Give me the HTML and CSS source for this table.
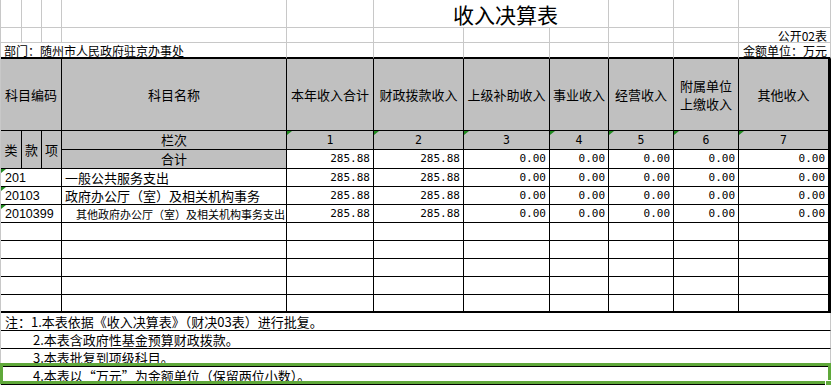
FILE: index.html
```html
<!DOCTYPE html>
<html lang="zh-CN">
<head>
<meta charset="utf-8">
<title>收入决算表</title>
<link rel="stylesheet" href="styles.css">
</head>
<body>
<div class="sheet">
<table class="grid">
<colgroup>
<col class="c1"><col class="c2"><col class="c3"><col class="c4"><col class="c5"><col class="c6"><col class="c7"><col class="c8"><col class="c9"><col class="c10"><col class="c11">
</colgroup>
<tbody>
<tr class="r-title">
<td></td><td></td><td></td><td></td><td></td>
<td colspan="3" class="title">收入决算表</td>
<td></td><td></td><td></td>
</tr>
<tr class="r-sub">
<td></td><td></td><td></td><td></td><td></td><td></td><td></td><td></td><td></td><td></td>
<td class="right">公开02表</td>
</tr>
<tr class="r-dept">
<td colspan="4" class="dept">部门：随州市人民政府驻京办事处</td>
<td></td><td></td><td></td><td></td><td></td><td></td>
<td class="right">金额单位：万元</td>
</tr>
<tr class="r-head">
<td colspan="3" class="h">科目编码</td>
<td class="h">科目名称</td>
<td class="h">本年收入合计</td>
<td class="h">财政拨款收入</td>
<td class="h">上级补助收入</td>
<td class="h">事业收入</td>
<td class="h">经营收入</td>
<td class="h">附属单位<br>上缴收入</td>
<td class="h last">其他收入</td>
</tr>
<tr class="r18">
<td rowspan="2" class="h">类</td>
<td rowspan="2" class="h">款</td>
<td rowspan="2" class="h">项</td>
<td class="h">栏次</td>
<td class="h idx tri">1</td>
<td class="h idx tri">2</td>
<td class="h idx tri">3</td>
<td class="h idx tri">4</td>
<td class="h idx tri">5</td>
<td class="h idx tri">6</td>
<td class="h idx tri last">7</td>
</tr>
<tr class="r18">
<td class="h">合计</td>
<td class="b num">285.88</td>
<td class="b num">285.88</td>
<td class="b num">0.00</td>
<td class="b num">0.00</td>
<td class="b num">0.00</td>
<td class="b num">0.00</td>
<td class="b num last">0.00</td>
</tr>
<tr class="r18">
<td colspan="3" class="b code tri">201</td>
<td class="b name">一般公共服务支出</td>
<td class="b num">285.88</td>
<td class="b num">285.88</td>
<td class="b num">0.00</td>
<td class="b num">0.00</td>
<td class="b num">0.00</td>
<td class="b num">0.00</td>
<td class="b num last">0.00</td>
</tr>
<tr class="r18">
<td colspan="3" class="b code tri">20103</td>
<td class="b name">政府办公厅（室）及相关机构事务</td>
<td class="b num">285.88</td>
<td class="b num">285.88</td>
<td class="b num">0.00</td>
<td class="b num">0.00</td>
<td class="b num">0.00</td>
<td class="b num">0.00</td>
<td class="b num last">0.00</td>
</tr>
<tr class="r18">
<td colspan="3" class="b code tri">2010399</td>
<td class="b name small">其他政府办公厅（室）及相关机构事务支出</td>
<td class="b num">285.88</td>
<td class="b num">285.88</td>
<td class="b num">0.00</td>
<td class="b num">0.00</td>
<td class="b num">0.00</td>
<td class="b num">0.00</td>
<td class="b num last">0.00</td>
</tr>
<tr class="r18">
<td colspan="3" class="b"></td><td class="b"></td><td class="b"></td><td class="b"></td><td class="b"></td><td class="b"></td><td class="b"></td><td class="b"></td><td class="b last"></td>
</tr>
<tr class="r18">
<td colspan="3" class="b"></td><td class="b"></td><td class="b"></td><td class="b"></td><td class="b"></td><td class="b"></td><td class="b"></td><td class="b"></td><td class="b last"></td>
</tr>
<tr class="r18">
<td colspan="3" class="b"></td><td class="b"></td><td class="b"></td><td class="b"></td><td class="b"></td><td class="b"></td><td class="b"></td><td class="b"></td><td class="b last"></td>
</tr>
<tr class="r18">
<td colspan="3" class="b"></td><td class="b"></td><td class="b"></td><td class="b"></td><td class="b"></td><td class="b"></td><td class="b"></td><td class="b"></td><td class="b last"></td>
</tr>
<tr class="r18 endrow">
<td colspan="3" class="b"></td><td class="b"></td><td class="b"></td><td class="b"></td><td class="b"></td><td class="b"></td><td class="b"></td><td class="b"></td><td class="b last"></td>
</tr>
<tr class="r18 note">
<td colspan="11" class="first">注：1.本表依据《收入决算表》（财决03表）进行批复。</td>
</tr>
<tr class="r18 note">
<td colspan="11">2.本表含政府性基金预算财政拨款。</td>
</tr>
<tr class="r18 note">
<td colspan="11">3.本表批复到项级科目。</td>
</tr>
<tr class="r18 note">
<td colspan="11">4.本表以“万元”为金额单位（保留两位小数）。</td>
</tr>
<tr class="r18 tail">
<td></td><td></td><td></td><td></td><td></td><td></td><td></td><td></td><td></td><td></td><td></td>
</tr>
</tbody>
</table>
<div class="selection"></div>
</div>
</body>
</html>
```

FILE: styles.css
```css
html, body {
  margin: 0;
  padding: 0;
  background: #fff;
}

body {
  width: 832px;
  height: 385px;
  overflow: hidden;
  font-family: "Noto Sans CJK SC", "Noto Sans", sans-serif;
  color: #000;
}

.sheet {
  position: relative;
}

.grid {
  border-collapse: separate;
  border-spacing: 0;
  table-layout: fixed;
  width: 831px;
  border-left: 1px solid #c8c8c8;
}

.c1 { width: 21px; }
.c2 { width: 20px; }
.c3 { width: 20px; }
.c4 { width: 225px; }
.c5 { width: 87px; }
.c6 { width: 90px; }
.c7 { width: 86px; }
.c8 { width: 59px; }
.c9 { width: 65px; }
.c10 { width: 65px; }
.c11 { width: 92px; }

.grid td {
  box-sizing: border-box;
  padding: 0;
  border-right: 1px solid #c8c8c8;
  border-bottom: 1px solid #c8c8c8;
  font-size: 13px;
  line-height: 16px;
  white-space: nowrap;
  overflow: hidden;
  vertical-align: middle;
}

/* top area */
.r-title td { height: 28px; }
.r-sub td { height: 15px; vertical-align: bottom; }
.r-dept td {
  height: 16px;
  border-bottom: 2px solid #000;
  vertical-align: bottom;
}

.grid td.title {
  font-size: 21px;
  line-height: 22px;
  vertical-align: bottom;
  padding: 0 0 2px 79px;
  text-align: left;
}

.grid td.right {
  font-size: 12px;
  line-height: 12px;
  text-align: right;
  padding-right: 3px;
}

.grid td.dept {
  font-size: 12px;
  line-height: 12px;
  padding-left: 3px;
}

/* table header */
.r-head td { height: 72px; }
.r18 td { height: 18px; }

.grid td.h {
  background: #c0c0c0;
  border-right-color: #000;
  border-bottom-color: #000;
  text-align: center;
  line-height: 18px;
}

.grid td.b {
  border-right-color: #000;
  border-bottom-color: #000;
}

.grid td.last {
  border-right: 3px solid #000;
}

.grid .endrow td {
  border-bottom: 2px solid #000;
}

.grid td.idx {
  font-family: "DejaVu Sans Mono", monospace;
  font-size: 11.5px;
}

.grid td.num {
  font-family: "DejaVu Sans Mono", monospace;
  font-size: 11px;
  text-align: right;
  padding-right: 3px;
}

.grid td.code {
  font-family: "Liberation Sans", sans-serif;
  font-size: 12.5px;
  padding-left: 4px;
}

.grid td.name {
  padding-left: 3px;
}

.grid td.name.small {
  font-size: 11px;
  padding-left: 14px;
}

.tri {
  position: relative;
}

.tri::before {
  content: "";
  position: absolute;
  left: 0;
  top: 0;
  border-top: 4px solid #1f8a1f;
  border-right: 5px solid transparent;
}

/* notes */
.grid .note td {
  border-bottom-color: #000;
  padding-left: 32px;
}

.grid .note td.first {
  padding-left: 4px;
}

.grid .tail td {
  border-bottom: none;
}

/* selected row (spreadsheet selection) */
.selection {
  position: absolute;
  left: 0;
  top: 363px;
  width: 831px;
  height: 21px;
  box-sizing: border-box;
  border: 3px solid #5fa83a;
  pointer-events: none;
}

.selection::after {
  content: "";
  position: absolute;
  right: -3px;
  bottom: -5px;
  width: 5px;
  height: 5px;
  background: #5fa83a;
  border-left: 1px solid #fff;
  border-top: 1px solid #fff;
}
```
